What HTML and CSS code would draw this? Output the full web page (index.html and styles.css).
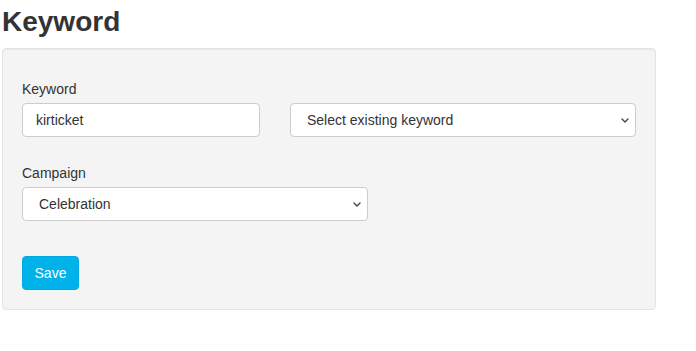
FILE: index.html
```html
<!DOCTYPE html>
<html>
<head>
<meta charset="utf-8">
<link rel="stylesheet" href="styles.css">
</head>
<body>
<div class="page">
  <h1 class="title">Keyword</h1>
  <div class="well">
    <div class="group">
      <label class="label">Keyword</label>
      <div class="row">
        <input class="input input-keyword" type="text" value="kirticket">
        <div class="select-wrap select-existing">
          <select class="select"><option>Select existing keyword</option></select>
          <svg class="chev" width="8" height="5" viewBox="0 0 8 5"><path d="M1 1 L4 4 L7 1" fill="none" stroke="#444" stroke-width="1.4" stroke-linecap="round" stroke-linejoin="round"/></svg>
        </div>
      </div>
    </div>
    <div class="group group-campaign">
      <label class="label">Campaign</label>
      <div class="select-wrap select-campaign">
        <select class="select"><option>Celebration</option></select>
        <svg class="chev" width="8" height="5" viewBox="0 0 8 5"><path d="M1 1 L4 4 L7 1" fill="none" stroke="#444" stroke-width="1.4" stroke-linecap="round" stroke-linejoin="round"/></svg>
      </div>
    </div>
    <button class="btn">Save</button>
  </div>
</div>
</body>
</html>
```
FILE: styles.css
```css
html, body {
  margin: 0;
  padding: 0;
  background: #fff;
}
body {
  font-family: "Liberation Sans", Arial, sans-serif;
  font-size: 14px;
  color: #333;
}
.page {
  padding: 0 2px;
  width: 654px;
}
.title {
  margin: 0;
  padding-top: 6px;
  font-size: 28px;
  line-height: 32px;
  font-weight: bold;
  color: #333;
  height: 42px;
}
.well {
  box-sizing: border-box;
  width: 654px;
  border: 1px solid #e3e3e3;
  border-radius: 4px;
  background: #f4f4f4;
  box-shadow: inset 0 1px 1px rgba(0,0,0,0.05);
  padding: 30px 19px 19px 19px;
}
.label {
  display: block;
  line-height: 20px;
  margin-bottom: 4px;
  color: #333;
}
.row {
  display: flex;
  gap: 30px;
}
.input {
  box-sizing: border-box;
  height: 34px;
  width: 238px;
  border: 1px solid #ccc;
  border-radius: 4px;
  padding: 0 13px;
  font-family: inherit;
  font-size: 14px;
  color: #333;
  background: #fff;
  outline: none;
}
.select-wrap {
  position: relative;
  height: 34px;
}
.select-existing { width: 346px; }
.select-campaign { width: 346px; }
.select {
  -webkit-appearance: none;
  appearance: none;
  box-sizing: border-box;
  width: 100%;
  height: 34px;
  border: 1px solid #ccc;
  border-radius: 4px;
  padding: 0 16px;
  font-family: inherit;
  font-size: 14px;
  color: #333;
  background: #fff;
  outline: none;
}
.chev {
  position: absolute;
  right: 7px;
  top: 15px;
  pointer-events: none;
}
.group-campaign {
  margin-top: 26px;
}
.btn {
  margin-top: 35px;
  box-sizing: border-box;
  height: 34px;
  width: 57px;
  border: 1px solid #00a9df;
  border-radius: 4px;
  background: #00b2ea;
  color: #fff;
  font-family: inherit;
  font-size: 14px;
  padding: 0;
  display: block;
}
```
